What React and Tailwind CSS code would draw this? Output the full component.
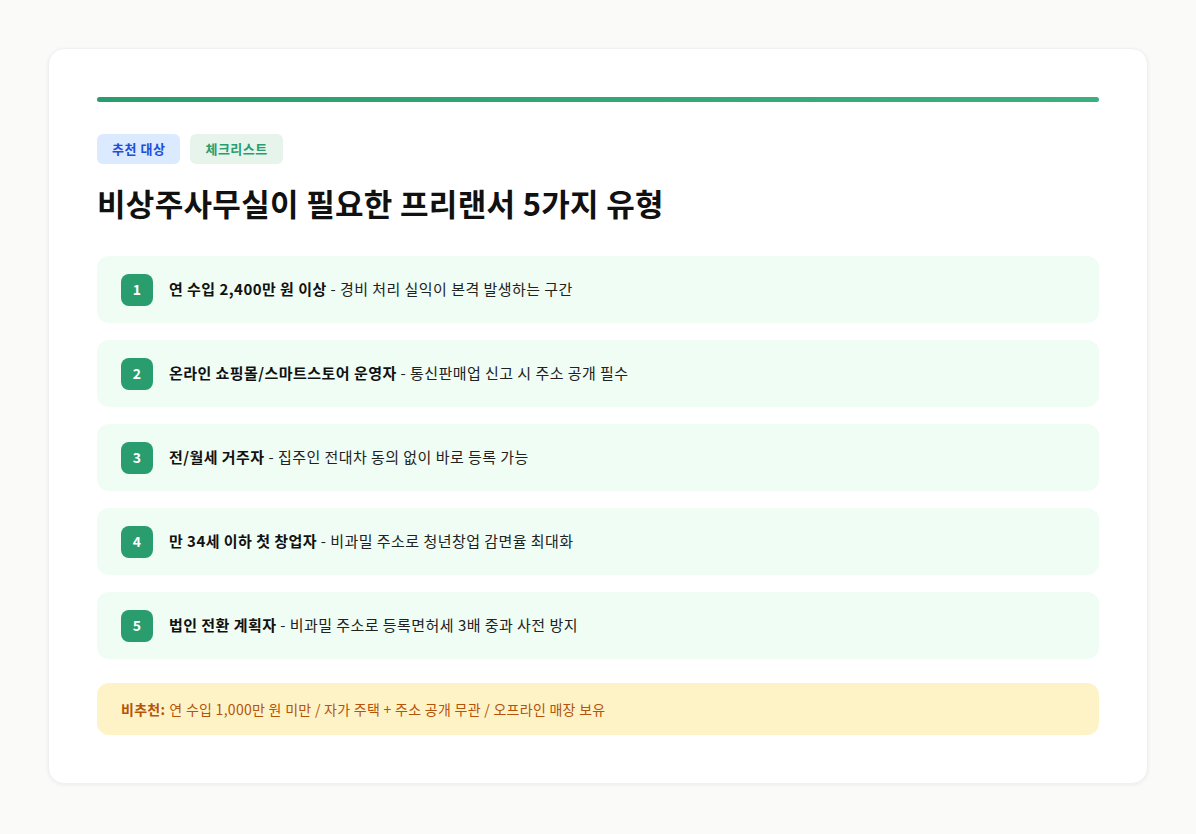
const items = [
  ['연 수입 2,400만 원 이상', '경비 처리 실익이 본격 발생하는 구간'],
  ['온라인 쇼핑몰/스마트스토어 운영자', '통신판매업 신고 시 주소 공개 필수'],
  ['전/월세 거주자', '집주인 전대차 동의 없이 바로 등록 가능'],
  ['만 34세 이하 첫 창업자', '비과밀 주소로 청년창업 감면율 최대화'],
  ['법인 전환 계획자', '비과밀 주소로 등록면허세 3배 중과 사전 방지'],
];

export default function App() {
  return (
    <div className="min-h-[834px] bg-[#fafaf9] p-12" style={{ fontFamily: '"Noto Sans CJK KR", "Noto Sans", sans-serif' }}>
      <div className="rounded-2xl bg-white p-12 shadow-[0_1px_4px_rgba(0,0,0,0.06)] border border-[#f0f0f0]">
        <div className="h-[5px] rounded-full bg-gradient-to-r from-[#2a9d6e] to-[#3bb07e]" />
        <div className="mt-8 flex gap-2.5">
          <span className="rounded-md bg-[#dbeafe] px-[15px] py-[5px] text-[13px] font-bold tracking-[0.04em] text-[#1d4ed8]">추천 대상</span>
          <span className="rounded-md bg-[#e6f4ec] px-[15px] py-[5px] text-[13px] font-bold tracking-[0.04em] text-[#2a9d6e]">체크리스트</span>
        </div>
        <h1 className="mt-[16px] text-[31px] font-bold tracking-[0.01em] text-[#111] leading-[1.5]">비상주사무실이 필요한 프리랜서 5가지 유형</h1>
        <div className="mt-[30px] flex flex-col gap-[17px]">
          {items.map(([b, t], i) => (
            <div key={i} className="flex h-[67px] items-center gap-4 rounded-xl bg-[#f0fdf4] px-6">
              <span className="flex h-8 w-8 items-center justify-center rounded-lg bg-[#2a9d6e] text-[14px] font-bold text-white">{i + 1}</span>
              <span className="text-[15px] tracking-[0.03em] text-[#222]"><b className="font-bold text-[#111]">{b}</b> - {t}</span>
            </div>
          ))}
        </div>
        <div className="mt-6 flex h-[52px] items-center rounded-xl bg-[#fef3c7] px-6 text-[14px] tracking-[0.02em] text-[#b45309]">
          <b className="mr-1 font-bold">비추천:</b> 연 수입 1,000만 원 미만 / 자가 주택 + 주소 공개 무관 / 오프라인 매장 보유
        </div>
      </div>
    </div>
  );
}
